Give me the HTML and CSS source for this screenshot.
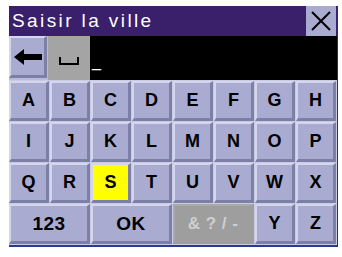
FILE: index.html
```html
<!DOCTYPE html>
<html>
<head>
<meta charset="utf-8">
<link rel="stylesheet" href="styles.css">
</head>
<body>
<div class="screen">
  <div class="titlebar">
    <span class="title">Saisir la ville</span>
    <div class="close">
      <svg width="22" height="22" viewBox="0 0 22 22"><path d="M2 2 L20 20 M20 2 L2 20" stroke="#000" stroke-width="2" fill="none"/></svg>
    </div>
  </div>
  <div class="inputrow">
    <div class="key back">
      <svg width="28" height="16" viewBox="0 0 28 16"><path d="M0 8 L10 0 L10 5 L28 5 L28 11 L10 11 L10 16 Z" fill="#000"/></svg>
    </div>
    <div class="spacekey">
      <svg width="20" height="8" viewBox="0 0 20 8"><path d="M1 0 V7 H19 V0" stroke="#000" stroke-width="2" fill="none"/></svg>
    </div>
    <div class="field"><span class="cursor">_</span></div>
  </div>
  <div class="keys">
    <div class="key">A</div><div class="key">B</div><div class="key">C</div><div class="key">D</div>
    <div class="key">E</div><div class="key">F</div><div class="key">G</div><div class="key">H</div>
    <div class="key">I</div><div class="key">J</div><div class="key">K</div><div class="key">L</div>
    <div class="key">M</div><div class="key">N</div><div class="key">O</div><div class="key">P</div>
    <div class="key">Q</div><div class="key">R</div><div class="key sel">S</div><div class="key">T</div>
    <div class="key">U</div><div class="key">V</div><div class="key">W</div><div class="key">X</div>
    <div class="key wide">123</div><div class="key wide">OK</div><div class="key wide dis">&amp; ? / -</div>
    <div class="key">Y</div><div class="key">Z</div>
  </div>
</div>
</body>
</html>
```

FILE: styles.css
```css
html, body { margin: 0; padding: 0; background: #fff; }
body { width: 342px; height: 257px; overflow: hidden; font-family: "Liberation Sans", Arial, sans-serif; }
.screen {
  margin: 6px 0 0 9px;
  width: 328px;
  border-right: 1px solid #2a2f6a;
  border-bottom: 2px solid #2b3a8a;
  background: #c9cbe4;
}
.titlebar {
  height: 30px;
  background: #3a1f6b;
  display: flex;
  align-items: center;
  justify-content: space-between;
}
.title { color: #fff; font-size: 19px; letter-spacing: 2.4px; padding-left: 3px; }
.close {
  width: 30px; height: 30px;
  background: #a9abd1;
  display: flex; align-items: center; justify-content: center;
  margin-right: 1px;
}
.inputrow { display: flex; height: 44px; background: #b9bbd9; }
.key {
  box-sizing: border-box;
  background: #a9abd1;
  border-top: 2px solid #d4d6ee;
  border-left: 2px solid #d4d6ee;
  border-right: 3px solid #7c7fa6;
  border-bottom: 3px solid #7c7fa6;
  display: flex; align-items: center; justify-content: center;
  font-weight: bold; font-size: 18px; color: #000;
  margin: 0 1px 1px 0;
}
.back { width: 38px; height: 42px; }
.spacekey {
  width: 42px; height: 44px;
  background: #a4a4a4;
  display: flex; align-items: center; justify-content: center;
  padding-top: 6px; box-sizing: border-box;
}
.field { flex: 1; background: #000; height: 44px; position: relative; }
.cursor { color: #fff; font-size: 16px; position: absolute; left: 2px; top: 17px; }
.keys {
  display: grid;
  grid-template-columns: repeat(8, 41px);
  grid-auto-rows: 41px;
  padding-top: 1px;
}
.wide { grid-column: span 2; font-size: 19px; letter-spacing: 0.5px; }
.sel { background: #ffff00; }
.dis { background: #9e9e9e; color: #cfcfcf; font-size: 17px; border-top-color: #a9a9a9; border-left-color: #a9a9a9; border-right-color: #9e9e9e; border-bottom-color: #9e9e9e; }
```
